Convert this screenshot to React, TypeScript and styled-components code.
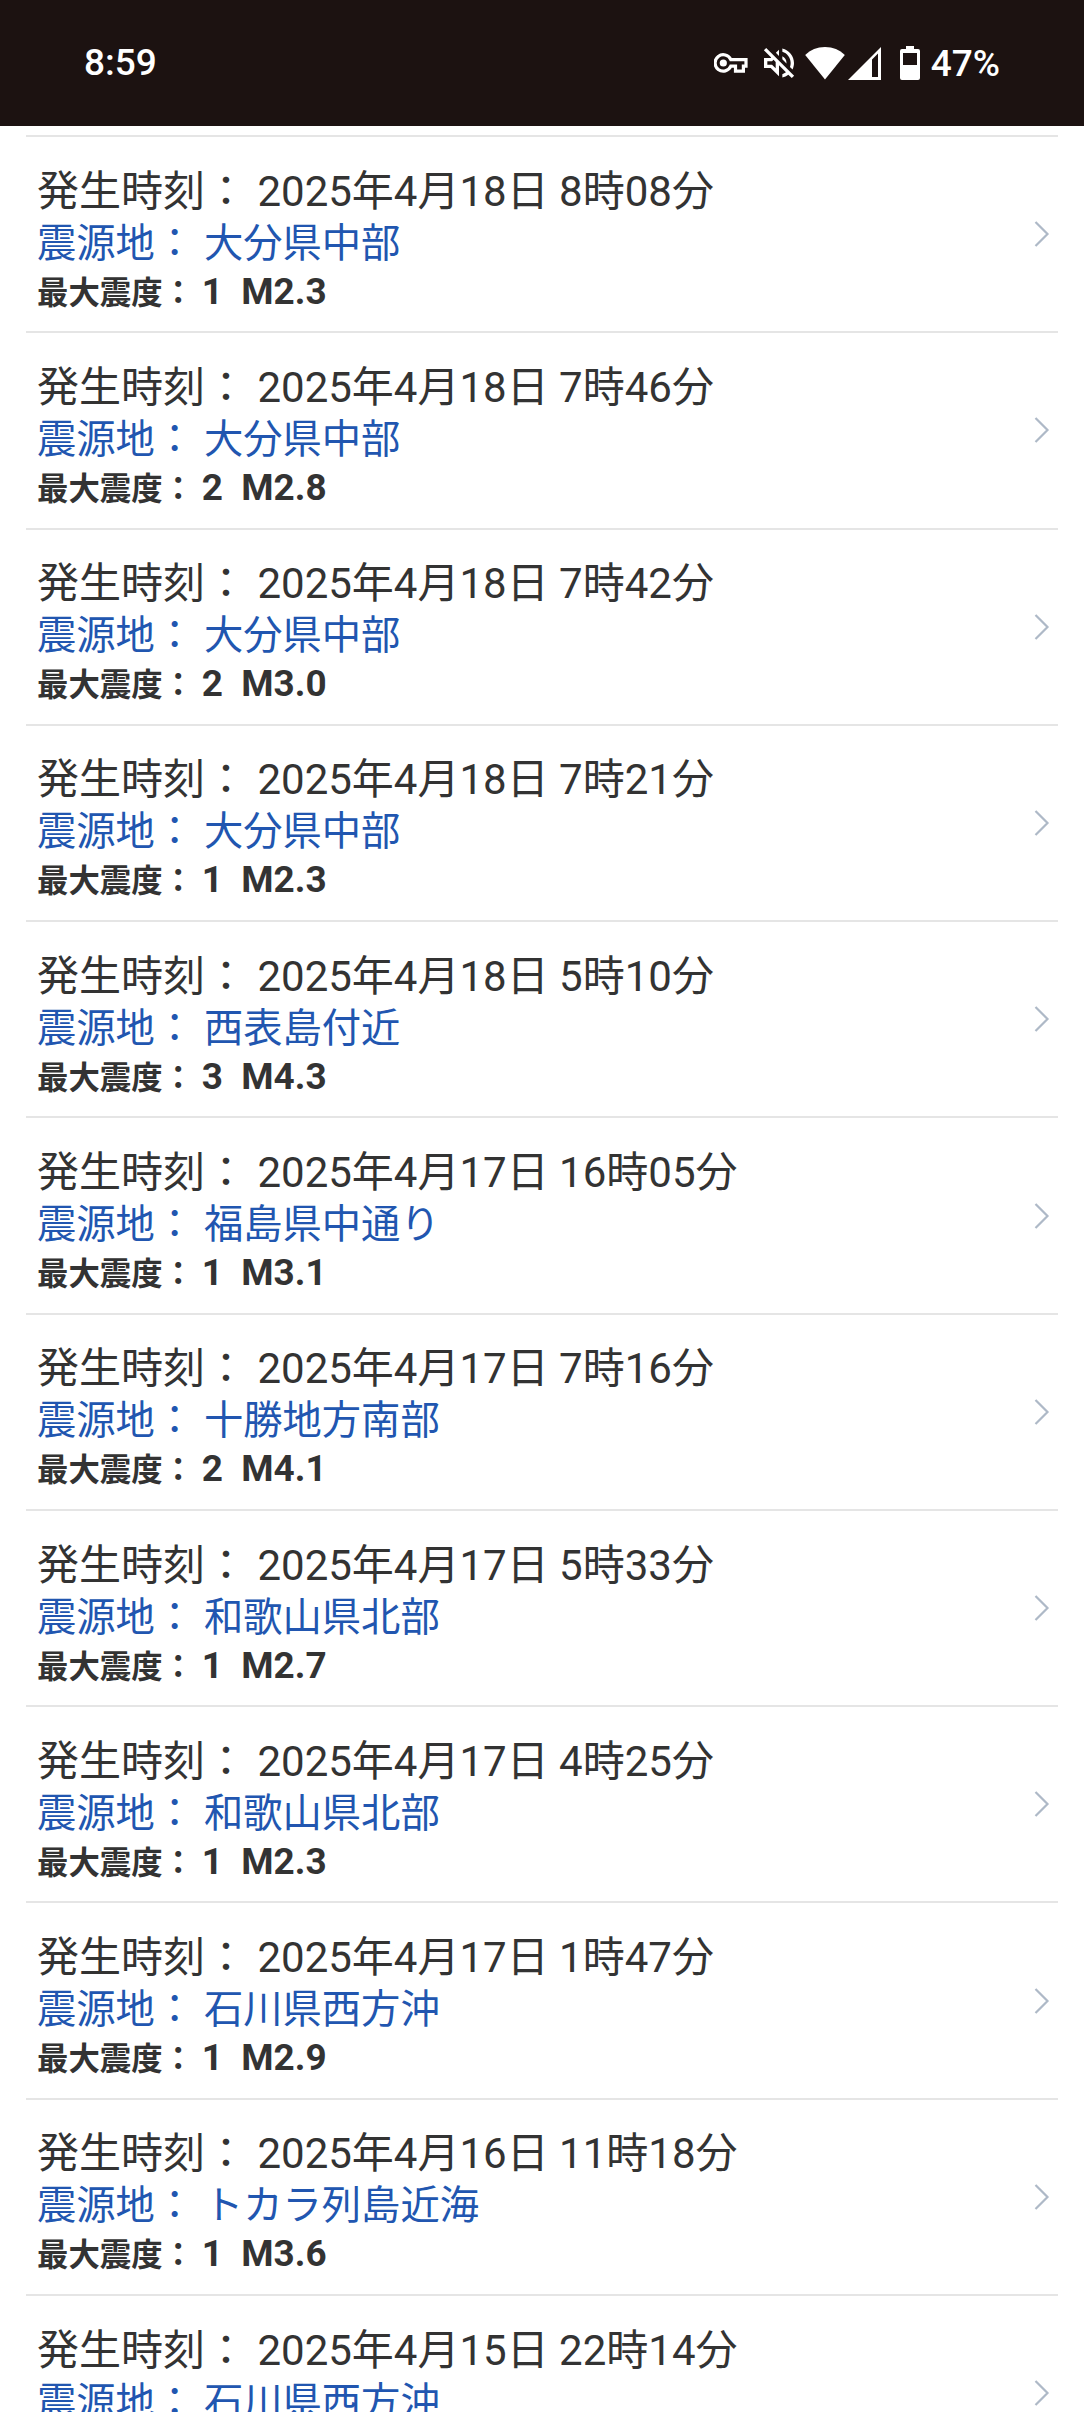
import React from "react";
import styled, { createGlobalStyle } from "styled-components";
import { MdOutlineVolumeOff } from "react-icons/md";

const GlobalStyle = createGlobalStyle`
  html, body { margin: 0; padding: 0; background: #fff; }
  body { font-family: Roboto, "Noto Sans CJK JP", sans-serif; }
`;

const Screen = styled.div`
  width: 1084px;
  height: 2412px;
  overflow: hidden;
  background: #fff;
  display: flex;
  flex-direction: column;
`;

const StatusBar = styled.header`
  flex: none;
  box-sizing: border-box;
  height: 126px;
  padding: 0 84px;
  background: #1c1211;
  color: #fff;
  display: flex;
  align-items: center;
  justify-content: space-between;
  font-size: 37px;
  font-weight: 500;
  line-height: 44px;
`;

const Clock = styled.time`
  white-space: nowrap;
`;

const StatusIcons = styled.div`
  display: flex;
  align-items: center;
`;

const Percent = styled.span`
  padding-top: 2px;
`;

const Glyph = styled.span<{ $w: number; $gap?: number }>`
  display: flex;
  flex: none;
  justify-content: center;
  width: ${(p) => p.$w}px;
  height: 36px;
  margin-right: ${(p) => p.$gap ?? 0}px;
  align-items: center;
  svg { flex: none; display: block; }
`;

const List = styled.ul`
  flex: none;
  list-style: none;
  margin: 9px 26px 0;
  padding: 0;
`;

const Row = styled.li`
  box-sizing: border-box;
  height: 196.27px;
  border-top: 2px solid #e5e5e5;
  padding: 27.700px 8px 0 11px;
  display: flex;
  justify-content: space-between;
`;

const Details = styled.div`
  display: flex;
  flex-direction: column;
  white-space: nowrap;
  color: #333;
`;

const Time = styled.div`
  font-size: 42px;
  line-height: 54px;
`;

const Place = styled.a`
  font-size: 39.3px;
  line-height: 50px;
  color: #2156b0;
`;

const Intensity = styled.div`
  font-size: 36.9px;
  line-height: 45.6px;
  font-weight: 700;
  white-space: pre;
`;

const Label = styled.span`
  font-size: 31.4px;
`;

const Chevron = styled.svg`
  flex: none;
  width: 16px;
  height: 28px;
  margin-top: 55.5px;
`;

type Quake = { time: string; place: string; level?: number; mag?: string };

const quakes: Quake[] = [
  { time: "2025年4月18日 8時08分", place: "大分県中部", level: 1, mag: "M2.3" },
  { time: "2025年4月18日 7時46分", place: "大分県中部", level: 2, mag: "M2.8" },
  { time: "2025年4月18日 7時42分", place: "大分県中部", level: 2, mag: "M3.0" },
  { time: "2025年4月18日 7時21分", place: "大分県中部", level: 1, mag: "M2.3" },
  { time: "2025年4月18日 5時10分", place: "西表島付近", level: 3, mag: "M4.3" },
  { time: "2025年4月17日 16時05分", place: "福島県中通り", level: 1, mag: "M3.1" },
  { time: "2025年4月17日 7時16分", place: "十勝地方南部", level: 2, mag: "M4.1" },
  { time: "2025年4月17日 5時33分", place: "和歌山県北部", level: 1, mag: "M2.7" },
  { time: "2025年4月17日 4時25分", place: "和歌山県北部", level: 1, mag: "M2.3" },
  { time: "2025年4月17日 1時47分", place: "石川県西方沖", level: 1, mag: "M2.9" },
  { time: "2025年4月16日 11時18分", place: "トカラ列島近海", level: 1, mag: "M3.6" },
  { time: "2025年4月15日 22時14分", place: "石川県西方沖" },
];

const KeyIcon = () => (
  <svg width="34" height="20" viewBox="0 0 34 20" fill="none" stroke="#fff" strokeWidth="3.2">
    <path d="M16.8 6.7H32v6.5h-2.6v5H21.5v-5H16.8A8.2 8.2 0 1 1 16.8 6.7Z" strokeLinejoin="miter" />
    <circle cx="9.3" cy="10" r="3.6" fill="#fff" stroke="none" />
  </svg>
);

const WifiIcon = () => (
  <svg width="40" height="34" viewBox="0 0 40 34" fill="#fff">
    <path d="M20 33.500 0.200 9C5.500 3.800 12 1 20 1s14.500 2.800 19.800 8Z" />
  </svg>
);

const SignalIcon = () => (
  <svg width="33" height="33" viewBox="0 0 33 33" fill="#fff" fillRule="evenodd">
    <path d="M33 0V33H0ZM24 12.500V30H30V6.500Z" />
  </svg>
);

const BatteryIcon = () => (
  <svg width="20" height="34" viewBox="0 0 20 34" fill="#fff" fillRule="evenodd">
    <path d="M6 0h8v3h4a2 2 0 0 1 2 2v27a2 2 0 0 1-2 2H2a2 2 0 0 1-2-2V5a2 2 0 0 1 2-2h4ZM3 7v12h14V7Z" />
  </svg>
);

export default function App() {
  return (
    <Screen lang="ja">
      <GlobalStyle />
      <StatusBar>
        <Clock>8:59</Clock>
        <StatusIcons>
          <Glyph $w={34} $gap={15}><KeyIcon /></Glyph>
          <Glyph $w={32} $gap={10}><MdOutlineVolumeOff size={40} /></Glyph>
          <Glyph $w={40} $gap={3}><WifiIcon /></Glyph>
          <Glyph $w={33} $gap={19}><SignalIcon /></Glyph>
          <Glyph $w={20} $gap={11}><BatteryIcon /></Glyph>
          <Percent>47%</Percent>
        </StatusIcons>
      </StatusBar>
      <List>
        {quakes.map((q) => (
          <Row key={q.time}>
            <Details>
              <Time>発生時刻： {q.time}</Time>
              <Place>震源地： {q.place}</Place>
              {q.mag && (
                <Intensity>
                  <Label>{"最大震度： "}</Label>{`${q.level}  ${q.mag}`}
                </Intensity>
              )}
            </Details>
            <Chevron viewBox="0 0 16 28" fill="none" stroke="#aeb9c7" strokeWidth="2.200">
              <path d="M1.500 2 13.500 14 1.500 26" />
            </Chevron>
          </Row>
        ))}
      </List>
    </Screen>
  );
}
